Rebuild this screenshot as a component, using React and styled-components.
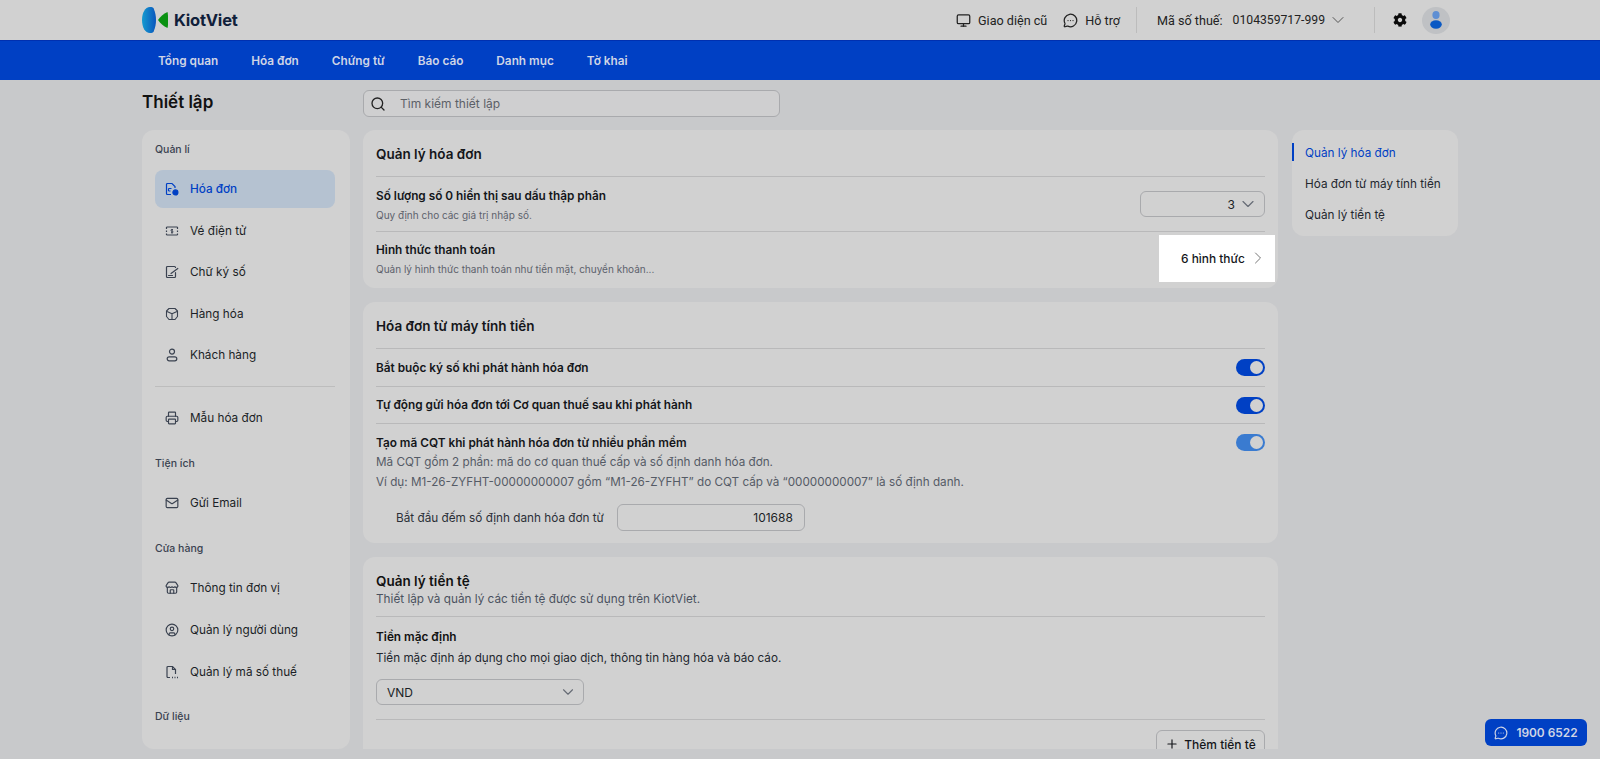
import React from 'react'
import styled, { createGlobalStyle } from 'styled-components'
import {
  Monitor, MessageCircleMore, ChevronDown, ChevronRight, Search, Plus,
  Printer, Mail, Store, CircleUser
} from 'lucide-react'
import { FaCog } from 'react-icons/fa'

const GlobalStyle = createGlobalStyle`
  html, body {
    margin: 0;
    height: 100%;
    overflow: hidden;
    background: #c8c9cb;
    font-family: Inter, "Noto Sans", sans-serif;
    color: #111;
  }
  * { box-sizing: border-box; }
`

const Page = styled.div`
  height: 759px;
  display: flex;
  flex-direction: column;
  overflow: hidden;
`

const Header = styled.header`
  height: 40px;
  flex: none;
  display: flex;
  align-items: center;
  justify-content: space-between;
  padding: 0 150px 0 142px;
  background: #d1d1d1;
`

const Brand = styled.div`
  display: flex;
  align-items: center;
  gap: 6px;
`

const BrandName = styled.span`
  font-size: 16.5px;
  font-weight: 700;
  color: #10203a;
  letter-spacing: -0.2px;
`

const HeaderRight = styled.div`
  display: flex;
  align-items: center;
  height: 100%;
`

const HeaderLink = styled.span`
  display: flex;
  align-items: center;
  gap: 7px;
  margin-left: ${({ $gap }) => $gap || 0}px;
  font-family: Roboto, sans-serif;
  font-size: 12.6px;
  color: #222;
`

const HeaderDivider = styled.span`
  width: 1px;
  height: 26px;
  margin: 0 ${({ $right }) => $right}px 0 ${({ $left }) => $left}px;
  background: #bcbcbc;
`

const TaxNumber = styled.span`
  margin-left: 3px;
  margin-right: -4px;
  font-size: 12.2px;
`

const Avatar = styled.span`
  width: 28px;
  height: 27px;
  margin-left: 15px;
  border-radius: 50%;
  background: #bfc1c4;
  display: flex;
  align-items: center;
  justify-content: center;
`

const NavBar = styled.nav`
  height: 40px;
  flex: none;
  display: flex;
  align-items: center;
  gap: 33px;
  padding-left: 158px;
  background: #0040c4;
  border-top: 1px solid #0030b0;
`

const NavItem = styled.span`
  font-size: 11.8px;
  font-weight: 600;
  color: #cfd5e6;
`

const Content = styled.div`
  flex: 1;
  min-height: 0;
  display: grid;
  grid-template-columns: 208px 915px 167px;
  grid-template-rows: 50px 1fr;
  column-gap: 13px;
  padding: 0 0 10px 142px;
`

const PageTitle = styled.h1`
  margin: 0;
  padding-top: 10px;
  font-size: 17px;
  line-height: 24px;
  font-weight: 600;
  color: #111;
`

const SearchBox = styled.div`
  width: 417px;
  height: 27px;
  margin-top: 10px;
  display: flex;
  align-items: center;
  gap: 14px;
  padding-left: 6px;
  border: 1px solid #a9aaad;
  border-radius: 6px;
  background: #cfcfd0;
  font-size: 12px;
  color: #5c6067;
`

const Sidebar = styled.aside`
  grid-row: 2;
  background: #d1d1d1;
  border-radius: 12px;
  padding: 0 15px 0 13px;
  overflow: hidden;
`

const SideLabel = styled.div`
  height: 14px;
  line-height: 14px;
  margin-top: ${({ $top }) => $top}px;
  margin-bottom: ${({ $bottom }) => $bottom}px;
  font-size: 10.5px;
  font-weight: 500;
  color: #3a4250;
`

const SideItem = styled.div`
  height: 38px;
  margin-bottom: 3.6px;
  display: flex;
  align-items: center;
  gap: 11px;
  padding-left: 10px;
  border-radius: 8px;
  font-size: 11.75px;
  background: ${({ $active }) => ($active ? '#b5c2d1' : 'transparent')};
  color: ${({ $active }) => ($active ? '#0040c4' : '#1b1f26')};
  font-weight: ${({ $active }) => ($active ? 500 : 400)};

  svg {
    flex: none;
    color: ${({ $active }) => ($active ? '#0040c4' : '#3a4250')};
  }
`

const SideDivider = styled.div`
  height: 1px;
  margin: 12px 0;
  background: #bdbdbd;
`

const Main = styled.main`
  grid-row: 2;
  min-height: 0;
  overflow: hidden;
  display: flex;
  flex-direction: column;
  gap: 14px;
`

const Card = styled.section`
  flex: none;
  padding: 0 13px;
  background: #d1d1d1;
  border-radius: 12px;
`

const CardHead = styled.div`
  height: 46px;
  padding-top: 1px;
  display: flex;
  align-items: center;
  font-size: 13.5px;
  font-weight: 600;
  color: #14161a;
`

const CardHeadStack = styled.div`
  height: 60px;
  padding-top: 15px;
  border-bottom: 1px solid #b9b9ba;
`

const StackTitle = styled.div`
  font-size: 13.5px;
  line-height: 18px;
  font-weight: 600;
`

const StackSub = styled.div`
  font-size: 11.75px;
  line-height: 18px;
  color: #4b5260;
`

const Row = styled.div`
  display: flex;
  align-items: center;
  justify-content: space-between;
  height: ${({ $height }) => $height}px;
  border-top: 1px solid #b9b9ba;
`

const RowText = styled.div`
  padding-top: ${({ $drop }) => $drop || 0}px;
  padding-bottom: ${({ $lift }) => $lift || 0}px;
`

const RowTitle = styled.div`
  font-size: 11.8px;
  line-height: 18px;
  font-weight: 600;
  color: #14161a;
`

const RowSub = styled.div`
  margin-top: 2px;
  font-size: 10px;
  line-height: 16px;
  color: #5d626c;
`

const SelectBox = styled.div`
  width: ${({ $width }) => $width}px;
  height: 26px;
  display: flex;
  align-items: center;
  justify-content: ${({ $left }) => ($left ? 'space-between' : 'flex-end')};
  gap: 3px;
  padding: 0 6px 0 10px;
  border: 1px solid #a9aaad;
  border-radius: 6px;
  font-size: 12px;
  color: #1b1f26;

  svg { color: #666b75; }
`

const Spotlight = styled.div`
  width: 116px;
  height: 47px;
  margin: 0 -10px 4px 0;
  padding-left: 22px;
  display: flex;
  align-items: center;
  gap: 3px;
  background: #fff;
  font-size: 11.9px;
  font-weight: 500;
  color: #14161a;

  svg { color: #777; }
`

const Toggle = styled.span`
  position: relative;
  flex: none;
  width: 29px;
  height: 17px;
  border-radius: 9px;
  background: ${({ $soft }) => ($soft ? '#3a7bd0' : '#0040c4')};

  &::after {
    content: '';
    position: absolute;
    top: 2px;
    right: 2px;
    width: 13px;
    height: 13px;
    border-radius: 50%;
    background: #d1d1d1;
  }
`

const LongRow = styled.div`
  padding-top: 10px;
  border-top: 1px solid #b9b9ba;
  height: 120px;
`

const LongHead = styled.div`
  display: flex;
  justify-content: space-between;
  align-items: flex-start;
`

const Description = styled.div`
  font-size: 11.7px;
  line-height: 20px;
  color: ${({ $dark }) => ($dark ? '#22262d' : '#555b66')};
  margin-top: ${({ $top }) => $top || 0}px;
`

const CounterRow = styled.div`
  display: flex;
  align-items: center;
  gap: 13px;
  margin-top: 12px;
  padding-left: 20px;
  font-size: 11.75px;
  color: #2b2f37;
`

const CounterInput = styled.div`
  width: 188px;
  height: 27px;
  padding-right: 11px;
  border: 1px solid #a9aaad;
  border-radius: 6px;
  text-align: right;
  line-height: 25px;
  font-size: 12px;
  color: #1b1f26;
`

const CurrencyBlock = styled.div`
  height: 102px;
  padding-top: 11px;
`

const CurrencyTitle = styled.div`
  font-size: 11.8px;
  line-height: 18px;
  font-weight: 600;
`

const CurrencySelect = styled(SelectBox)`
  margin-top: 11px;
`

const AddRow = styled.div`
  display: flex;
  justify-content: flex-end;
  padding: 10px 0;
  border-top: 1px solid #b9b9ba;
`

const AddButton = styled.div`
  width: 109px;
  height: 28px;
  display: flex;
  align-items: center;
  justify-content: center;
  gap: 5px;
  border: 1px solid #a9aaad;
  border-radius: 6px;
  font-size: 12px;
  font-weight: 500;
  color: #14161a;
`

const Outline = styled.aside`
  grid-row: 2;
  margin-left: 1px;
  height: 106px;
  padding-top: 2px;
  display: flex;
  flex-direction: column;
  justify-content: center;
  background: #d1d1d1;
  border-radius: 12px;
`

const OutlineItem = styled.div`
  height: 31px;
  display: flex;
  align-items: center;
  padding-left: 13px;
  font-size: 11.75px;
  color: ${({ $active }) => ($active ? '#0040c4' : '#23272e')};
  position: relative;

  ${({ $active }) => $active && `
    &::before {
      content: '';
      position: absolute;
      left: 0;
      top: 5px;
      width: 2px;
      height: 18px;
      background: #0040c4;
    }
  `}
`

const CallButton = styled.div`
  position: fixed;
  left: 1485px;
  top: 719px;
  width: 102px;
  height: 27px;
  display: flex;
  align-items: center;
  justify-content: center;
  gap: 8px;
  background: #0040c4;
  border-radius: 6px;
  font-size: 11.9px;
  font-weight: 600;
  color: #cfd5e6;
`

const Logo = () => (
  <svg width="26" height="26" viewBox="0 0 26 26">
    <defs>
      <linearGradient id="lens" x1="0" y1="0" x2="1" y2="0">
        <stop offset="0" stopColor="#159bd0" />
        <stop offset="1" stopColor="#0a56bd" />
      </linearGradient>
    </defs>
    <path d="M8 0C3 0 0 6 0 13C0 20 3 26 8 26C10 26 11 25.5 11.5 25C13.5 20 14 16.5 14 13C14 9.5 13.5 6 11.5 1C11 .5 10 0 8 0Z" fill="url(#lens)" />
    <path d="M16 13C18 10 21.5 6.5 25.5 5C26.5 10 26.5 16 25.5 21C21.5 19.5 18 16 16 13Z" fill="#0a9112" />
  </svg>
)

const PersonIcon = () => (
  <svg width="12" height="18" viewBox="0 0 12 18">
    <ellipse cx="6" cy="4" rx="3.6" ry="4" fill="#5f8fd3" />
    <ellipse cx="6" cy="13.5" rx="5.8" ry="4.2" fill="#0a59c4" />
  </svg>
)

const InvoiceIcon = () => (
  <svg width="14" height="14" viewBox="0 0 14 14" fill="none" stroke="currentColor" strokeWidth="1.2">
    <path d="M6 12.5H2.5a1 1 0 0 1-1-1v-9a1 1 0 0 1 1-1H7l3 3v1.5" />
    <path d="M3.5 6.5h3M3.5 9h2M3.5 6.5v2.5" />
    <circle cx="10.4" cy="10.4" r="2.5" fill="currentColor" />
  </svg>
)

const TicketIcon = () => (
  <svg width="14" height="14" viewBox="0 0 14 14" fill="none" stroke="currentColor" strokeWidth="1.2">
    <path d="M1.5 3h11M1.5 11h11M1.5 3v2M1.5 6.5v1.5M1.5 9.5V11M12.5 3v2M12.5 6.5v1.5M12.5 9.5V11" />
    <path d="M8 5.5H6.4a.9.9 0 0 0 0 1.6h1.2a.9.9 0 0 1 0 1.6H6M7 5v4.5" strokeWidth=".9" />
  </svg>
)

const SignIcon = () => (
  <svg width="14" height="14" viewBox="0 0 14 14" fill="none" stroke="currentColor" strokeWidth="1.2" strokeLinecap="round">
    <path d="M10.5 7.5v4a1 1 0 0 1-1 1h-7a1 1 0 0 1-1-1v-9a1 1 0 0 1 1-1h7a1 1 0 0 1 1 1" />
    <path d="M6 8.5L12.8 3.5M3.5 10.5h4" />
  </svg>
)

const BoxIcon = () => (
  <svg width="14" height="14" viewBox="0 0 14 14" fill="none" stroke="currentColor" strokeWidth="1.1" strokeLinejoin="round">
    <path d="M4 1.5h6l2.5 2.5v5.5L10 12.5H4L1.5 9.5V4Z" />
    <path d="M2 4.5l5 2.2 5-2.2M7 6.7v5.8" />
  </svg>
)

const CustomerIcon = () => (
  <svg width="14" height="14" viewBox="0 0 14 14" fill="none" stroke="currentColor" strokeWidth="1.2">
    <circle cx="7" cy="3.6" r="2.5" />
    <rect x="2.2" y="8.8" width="9.6" height="4" rx="2" />
  </svg>
)

const TaxFileIcon = () => (
  <svg width="14" height="14" viewBox="0 0 14 14" fill="none" stroke="currentColor" strokeWidth="1.2">
    <path d="M5 12.5H3a1 1 0 0 1-1-1v-9a1 1 0 0 1 1-1h4.5l3 3V9" />
    <path d="M7.5 1.5v3h3" />
    <path d="M7 12.5h1M9.5 12.5h1M12 12.5h1" strokeWidth="1.4" />
  </svg>
)

const manageItems = [
  ['Vé điện tử', <TicketIcon key="a" />],
  ['Chữ ký số', <SignIcon key="b" />],
  ['Hàng hóa', <BoxIcon key="c" />],
  ['Khách hàng', <CustomerIcon key="d" />]
]

const storeItems = [
  ['Thông tin đơn vị', <Store key="a" size={14} />],
  ['Quản lý người dùng', <CircleUser key="b" size={14} />],
  ['Quản lý mã số thuế', <TaxFileIcon key="c" />]
]

const navItems = ['Tổng quan', 'Hóa đơn', 'Chứng từ', 'Báo cáo', 'Danh mục', 'Tờ khai']

export default function App () {
  return (
    <Page>
      <GlobalStyle />
      <Header>
        <Brand>
          <Logo />
          <BrandName>KiotViet</BrandName>
        </Brand>
        <HeaderRight>
          <HeaderLink><Monitor size={15} />Giao diện cũ</HeaderLink>
          <HeaderLink $gap={16}><MessageCircleMore size={15} />Hỗ trợ</HeaderLink>
          <HeaderDivider $left={16} $right={20} />
          <HeaderLink>
            Mã số thuế:
            <TaxNumber>0104359717-999</TaxNumber>
            <ChevronDown size={20} strokeWidth={1.2} color="#555" />
          </HeaderLink>
          <HeaderDivider $left={26} $right={18} />
          <FaCog size={14} color="#0a0a0a" />
          <Avatar><PersonIcon /></Avatar>
        </HeaderRight>
      </Header>

      <NavBar>
        {navItems.map(item => <NavItem key={item}>{item}</NavItem>)}
      </NavBar>

      <Content>
        <PageTitle>Thiết lập</PageTitle>
        <SearchBox>
          <Search size={16} color="#222" />
          Tìm kiếm thiết lập
        </SearchBox>
        <span />

        <Sidebar>
          <SideLabel $top={13} $bottom={13}>Quản lí</SideLabel>
          <SideItem $active><InvoiceIcon />Hóa đơn</SideItem>
          {manageItems.map(([label, icon]) => <SideItem key={label}>{icon}{label}</SideItem>)}
          <SideDivider />
          <SideItem><Printer size={14} />Mẫu hóa đơn</SideItem>
          <SideLabel $top={20} $bottom={13}>Tiện ích</SideLabel>
          <SideItem><Mail size={14} />Gửi Email</SideItem>
          <SideLabel $top={20} $bottom={13}>Cửa hàng</SideLabel>
          {storeItems.map(([label, icon]) => <SideItem key={label}>{icon}{label}</SideItem>)}
          <SideLabel $top={19} $bottom={0}>Dữ liệu</SideLabel>
        </Sidebar>

        <Main>
          <Card>
            <CardHead>Quản lý hóa đơn</CardHead>
            <Row $height={55}>
              <RowText $drop={1}>
                <RowTitle>Số lượng số 0 hiển thị sau dấu thập phân</RowTitle>
                <RowSub>Quy định cho các giá trị nhập số.</RowSub>
              </RowText>
              <SelectBox $width={125}>3<ChevronDown size={20} strokeWidth={1.4} /></SelectBox>
            </Row>
            <Row $height={57}>
              <RowText $lift={3}>
                <RowTitle>Hình thức thanh toán</RowTitle>
                <RowSub>Quản lý hình thức thanh toán như tiền mặt, chuyển khoản...</RowSub>
              </RowText>
              <Spotlight>6 hình thức<ChevronRight size={20} strokeWidth={1.2} /></Spotlight>
            </Row>
          </Card>

          <Card>
            <CardHead>Hóa đơn từ máy tính tiền</CardHead>
            <Row $height={38}>
              <RowTitle>Bắt buộc ký số khi phát hành hóa đơn</RowTitle>
              <Toggle />
            </Row>
            <Row $height={37}>
              <RowTitle>Tự động gửi hóa đơn tới Cơ quan thuế sau khi phát hành</RowTitle>
              <Toggle />
            </Row>
            <LongRow>
              <LongHead>
                <RowTitle>Tạo mã CQT khi phát hành hóa đơn từ nhiều phần mềm</RowTitle>
                <Toggle $soft />
              </LongHead>
              <Description>Mã CQT gồm 2 phần: mã do cơ quan thuế cấp và số định danh hóa đơn.</Description>
              <Description>Ví dụ: M1-26-ZYFHT-00000000007 gồm “M1-26-ZYFHT” do CQT cấp và “00000000007” là số định danh.</Description>
              <CounterRow>
                Bắt đầu đếm số định danh hóa đơn từ
                <CounterInput>101688</CounterInput>
              </CounterRow>
            </LongRow>
          </Card>

          <Card>
            <CardHeadStack>
              <StackTitle>Quản lý tiền tệ</StackTitle>
              <StackSub>Thiết lập và quản lý các tiền tệ được sử dụng trên KiotViet.</StackSub>
            </CardHeadStack>
            <CurrencyBlock>
              <CurrencyTitle>Tiền mặc định</CurrencyTitle>
              <Description $dark $top={2}>Tiền mặc định áp dụng cho mọi giao dịch, thông tin hàng hóa và báo cáo.</Description>
              <CurrencySelect $width={208} $left>VND<ChevronDown size={18} strokeWidth={1.5} /></CurrencySelect>
            </CurrencyBlock>
            <AddRow>
              <AddButton><Plus size={14} />Thêm tiền tệ</AddButton>
            </AddRow>
          </Card>
        </Main>

        <Outline>
          <OutlineItem $active>Quản lý hóa đơn</OutlineItem>
          <OutlineItem>Hóa đơn từ máy tính tiền</OutlineItem>
          <OutlineItem>Quản lý tiền tệ</OutlineItem>
        </Outline>
      </Content>

      <CallButton><MessageCircleMore size={14} />1900 6522</CallButton>
    </Page>
  )
}
